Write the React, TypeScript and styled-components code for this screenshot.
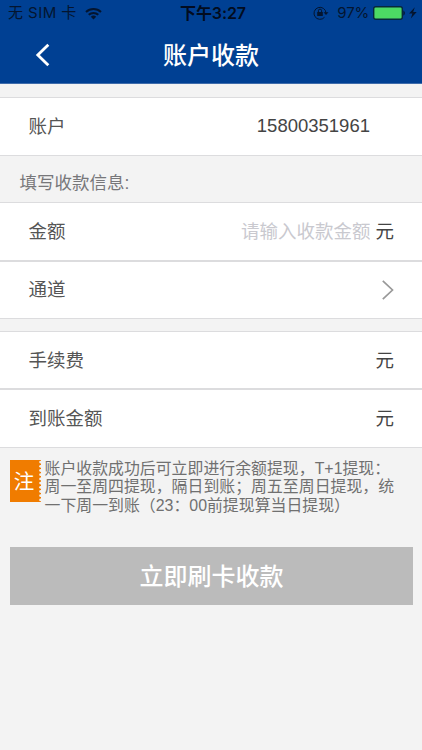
import React from 'react';
import styled, { createGlobalStyle } from 'styled-components';

const GlobalStyle = createGlobalStyle`
  * { box-sizing: border-box; }
  body { margin: 0; background: #f3f3f3; }
`;

const Screen = styled.main`
  display: flex;
  flex-direction: column;
  width: 422px;
  height: 750px;
  overflow: hidden;
  background: #f3f3f3;
  font-family: 'Liberation Sans', 'Noto Sans CJK SC', sans-serif;
  color: #555;
  white-space: nowrap;
`;

const Header = styled.header`
  height: 84px;
  background: #004093;
  border-bottom: 1px solid #3f6cab;
`;

const StatusBar = styled.div`
  display: grid;
  grid-template-columns: 1fr auto 1fr;
  align-items: center;
  height: 26px;
  padding: 0 4px 0 8px;
  font-family: Inter, 'Noto Sans CJK SC', sans-serif;
  font-size: 15px;
  line-height: 26px;
  color: #04152f;
`;

const StatusGroup = styled.div<{ $end?: boolean }>`
  display: flex;
  align-items: center;
  justify-content: ${(p) => (p.$end ? 'flex-end' : 'flex-start')};
`;

const Carrier = styled.span`
  letter-spacing: 0.45px;
  margin-right: 8px;
`;

const Clock = styled.time`
  font-weight: 600;
  font-size: 16px;
  letter-spacing: -0.1px;
  color: #020c20;
`;

const Percent = styled.span`
  margin: 0 4px 0 8px;
  font-size: 15px;
  letter-spacing: -0.2px;
`;

const NavBar = styled.div`
  display: grid;
  grid-template-columns: 50px 1fr 50px;
  align-items: center;
  height: 57px;
`;

const BackButton = styled.button`
  display: flex;
  padding: 0 0 0 35px;
  border: 0;
  background: none;
`;

const Title = styled.h1`
  margin: 0;
  padding-top: 2px;
  font-size: 24px;
  line-height: 56px;
  font-weight: 500;
  text-align: center;
  color: #fff;
`;

const Group = styled.section<{ $gap: number }>`
  margin-top: ${(p) => p.$gap}px;
  border-top: 1px solid #dcdcde;
  border-bottom: 1px solid #dcdcde;
  background: #fff;
`;

const Row = styled.div<{ $height: number; $divided?: boolean; $right?: number; $top?: number }>`
  display: flex;
  align-items: center;
  height: ${(p) => p.$height}px;
  padding: ${(p) => p.$top ?? 0}px ${(p) => p.$right ?? 28}px 0 28.5px;
  border-bottom: ${(p) => (p.$divided ? '2px solid #dcdcde' : '0')};
  font-size: 18.5px;
  line-height: 28px;
`;

const Label = styled.span`
  margin-right: auto;
`;

const Value = styled.span`
  color: #444;
`;

const AccountNumber = styled(Value)`
  padding-bottom: 2px;
`;

const AmountInput = styled.input`
  width: 150px;
  margin-right: 5px;
  padding: 0;
  border: 0;
  outline: 0;
  background: none;
  font: inherit;
  text-align: right;
  &::placeholder { color: #c9c9cf; opacity: 1; }
`;

const SectionTitle = styled.h2`
  height: 46px;
  margin: 0;
  padding-left: 19.5px;
  font-size: 17.5px;
  line-height: 54px;
  font-weight: 400;
  color: #77777a;
`;

const Notice = styled.div`
  display: flex;
  align-items: flex-start;
  height: 74px;
  margin: 12px 0 0 10px;
`;

const Badge = styled.div`
  position: relative;
  flex: none;
  width: 31px;
  height: 42px;
  margin-right: 3.5px;
  padding-right: 3px;
  background: #f07c00;
  color: #fff;
  font-size: 20.5px;
  line-height: 43px;
  text-align: center;
`;

const Perforation = styled.svg`
  position: absolute;
  top: 0;
  right: 0;
`;

const NoticeText = styled.p`
  margin: 0;
  font-size: 15.9px;
  line-height: 18.3px;
  color: #707070;
`;

const SubmitButton = styled.button`
  width: 403px;
  height: 58px;
  margin: 12.5px 0 0 10px;
  padding: 2px 0 0;
  border: 0;
  background: #bbb;
  color: #fff;
  font: 500 24px/56px 'Liberation Sans', 'Noto Sans CJK SC', sans-serif;
`;

const WifiIcon = () => (
  <svg width="17" height="13" viewBox="0 0 17 13" fill="none" stroke="#04152f" strokeWidth="2">
    <path d="M1 5a10.8 10.8 0 0 1 15 0" />
    <path d="M3.7 7.8a7 7 0 0 1 9.6 0" />
    <path d="M8.5 12.5 5.8 9.8a3.9 3.9 0 0 1 5.4 0z" fill="#04152f" stroke="none" />
  </svg>
);

const RotationLockIcon = () => (
  <svg width="16" height="14" viewBox="0 0 16 14" fill="none" stroke="#04152f">
    <path d="M11.5 11.3A6 6 0 1 1 13 7" />
    <path d="M10.5 6.2h5L13 9z" fill="#04152f" stroke="none" />
    <path d="M5.4 6V4.7a1.6 1.6 0 0 1 3.2 0V6" />
    <path d="M4.2 6h5.6v4H4.2z" fill="#04152f" stroke="none" />
  </svg>
);

const BatteryIcon = () => (
  <svg width="45" height="14" viewBox="0 0 45 14">
    <rect x="0.7" y="0.7" width="28.6" height="12.6" rx="2" fill="#4cd964" stroke="#06283c" strokeWidth="1.4" />
    <path d="M30.4 4.2q3 2.8 0 5.6z" fill="#04152f" />
    <path d="M41.8 1.2 36 7.6h3.4L37.8 12.6l5.9-6.5h-3.5z" fill="#04152f" />
  </svg>
);

const notches = Array.from({ length: 10 }, (_, i) => i * 4.2 + 2.1);

export default function App() {
  return (
    <>
      <GlobalStyle />
      <Screen>
        <Header>
          <StatusBar>
            <StatusGroup>
              <Carrier>无 SIM 卡</Carrier>
              <WifiIcon />
            </StatusGroup>
            <Clock>下午3:27</Clock>
            <StatusGroup $end>
              <RotationLockIcon />
              <Percent>97%</Percent>
              <BatteryIcon />
            </StatusGroup>
          </StatusBar>
          <NavBar>
            <BackButton aria-label="返回">
              <svg width="16" height="26" viewBox="0 0 16 26" fill="none" stroke="#fff" strokeWidth="3">
                <path d="M14.2 2 3 13 14.2 24" />
              </svg>
            </BackButton>
            <Title>账户收款</Title>
          </NavBar>
        </Header>

        <Group $gap={13}>
          <Row $height={57} $right={52}>
            <Label>账户</Label>
            <AccountNumber>15800351961</AccountNumber>
          </Row>
        </Group>

        <SectionTitle>填写收款信息:</SectionTitle>

        <Group $gap={0}>
          <Row $height={59} $divided>
            <Label>金额</Label>
            <AmountInput placeholder="请输入收款金额" />
            <Value>元</Value>
          </Row>
          <Row $height={56}>
            <Label>通道</Label>
            <svg width="12" height="20" viewBox="0 0 12 20" fill="none" stroke="#999" strokeWidth="1.7">
              <path d="M.8.8 10.5 10 .8 19.2" />
            </svg>
          </Row>
        </Group>

        <Group $gap={12}>
          <Row $height={58} $divided $top={2}>
            <Label>手续费</Label>
            <Value>元</Value>
          </Row>
          <Row $height={57} $top={1}>
            <Label>到账金额</Label>
            <Value>元</Value>
          </Row>
        </Group>

        <Notice>
          <Badge>
            注
            <Perforation width="3" height="42" viewBox="0 0 3 42" fill="#f3f3f3">
              {notches.map((y) => (
                <circle key={y} cx="2.6" cy={y} r="1.4" />
              ))}
            </Perforation>
          </Badge>
          <NoticeText>
            账户收款成功后可立即进行余额提现，T+1提现：
            <br />
            周一至周四提现，隔日到账；周五至周日提现，统
            <br />
            一下周一到账（23：00前提现算当日提现）
          </NoticeText>
        </Notice>

        <SubmitButton>立即刷卡收款</SubmitButton>
      </Screen>
    </>
  );
}
